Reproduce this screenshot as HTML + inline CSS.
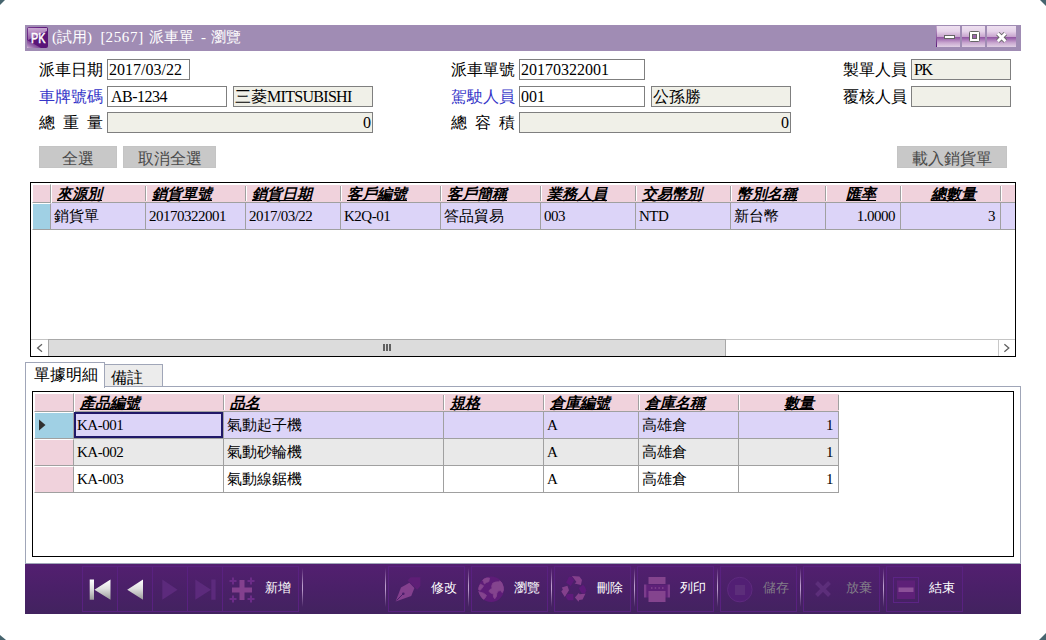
<!DOCTYPE html>
<html lang="zh-Hant">
<head>
<meta charset="utf-8">
<title>派車單 - 瀏覽</title>
<style>
html,body{margin:0;padding:0}
body{width:1046px;height:640px;overflow:hidden;position:relative;background:#46646e;font-family:"Liberation Serif",serif;color:#000}
#page{position:absolute;left:0;top:0;width:1046px;height:640px;background:#fff;clip-path:polygon(5px 0,1040px 0,1046px 6px,1046px 633px,1039px 640px,6px 640px,0 635px,0 5px)}
#page div,#page span,#page svg{position:absolute;box-sizing:border-box;white-space:nowrap}
/* title bar */
#title{left:25px;top:25px;width:996px;height:26px;background:#a08cb4}
#title .cap{left:27px;top:1px;height:22px;line-height:22px;font-size:15px;color:#fff}
.wb{top:1px;height:21px;background:linear-gradient(to bottom,#eee0f0 0%,#e6d4ea 25%,#c9a6cf 50%,#9056a2 53%,#9e68ae 60%,#c9a8d0 80%,#e0cfe4 100%)}
/* form */
.lbl{font-size:16px;line-height:21px;height:21px}
.blue{color:#3535c8}
.inp{height:21px;border:1px solid #7f7f7f;background:#fff;font-size:16px;line-height:19px;padding:0 1px;overflow:hidden}
.ro{background:#f0f0e8}
.r{text-align:right}
#page .i{position:static}
.btn{top:146px;height:22px;background:#c8c8c8;border:1px solid #c4c4c4;color:#4a4a4a;font-size:16px;line-height:23px;text-align:center}
/* grids */
.grid{border:1px solid #000;background:#fff;overflow:hidden}
.h{background:#f0d2dc;border-bottom:1px solid #a0a0a0;font-size:15px;font-style:italic;font-weight:600;text-decoration:underline;line-height:19px;padding-left:6px;overflow:hidden}
.hi{background:#f0d2dc;border-left:1px solid #fff;border-top:1px solid #fff;border-right:1px solid #a0a0a0;border-bottom:1px solid #a0a0a0}
.vs{top:3px;width:2px;height:15px;background:linear-gradient(to right,#a0a0a0 50%,#fff 50%)}
.c{border-right:1px solid #a0a0a0;border-bottom:1px solid #a0a0a0;font-size:15px;line-height:26px;padding-left:3px;overflow:hidden}
.hr{text-align:right;padding-left:0;padding-right:25px}
.hi.ind{background:#a0d0e4}
.c.r{padding-left:0;padding-right:5px}
.focus{border:2px solid #201868}
.sel{background:#dcd4f8}
.alt{background:#e9e9e9}
.n{font-size:15px;letter-spacing:-.5px;line-height:27px}
/* toolbar */
#tb{left:25px;top:564px;width:996px;height:50px;background:linear-gradient(to bottom,#531f70 0%,#4a2068 50%,#42235f 100%)}
.tbtn{top:2px;height:46px;border:1px solid #592180}
.tbtn .t{left:42px;top:12.5px;font-family:"Liberation Sans",sans-serif;font-size:12.6px;line-height:16px;color:#fff}
.tbtn .t.dis{color:#827e88}
.sep{top:4px;width:1px;height:39px;background:linear-gradient(to bottom,rgba(200,170,215,0) 0%,rgba(200,170,215,.9) 45%,rgba(200,170,215,.9) 55%,rgba(200,170,215,0) 100%)}
</style>
</head>
<body>
<div id="page">

<!-- TITLE BAR -->
<div id="title">
  <svg style="left:2px;top:2px" width="21" height="21" viewBox="0 0 21 21">
    <defs>
      <linearGradient id="ig" x1="0" y1="0" x2="1" y2="1"><stop offset="0" stop-color="#7a3a92"/><stop offset=".5" stop-color="#5a1478"/><stop offset="1" stop-color="#5a1478"/></linearGradient>
      <linearGradient id="ig2" x1="0" y1="0" x2="0" y2="1"><stop offset="0" stop-color="#d8bedf"/><stop offset="1" stop-color="#9a62aa"/></linearGradient>
      <linearGradient id="ig3" x1="0" y1="1" x2="1" y2="0"><stop offset="0" stop-color="#dcc6e2"/><stop offset="1" stop-color="#7a3a92" stop-opacity="0"/></linearGradient>
    </defs>
    <rect x="0" y="0" width="21" height="21" rx="2" fill="url(#ig)"/>
    <path d="M1 1H20V4L1 13Z" fill="url(#ig2)" opacity=".85"/>
    <path d="M0 13V21H14Z" fill="url(#ig3)" opacity=".9"/>
    <text x="4" y="16.4" font-family="Liberation Sans, sans-serif" font-size="14.3" textLength="14.5" lengthAdjust="spacingAndGlyphs" fill="#fff" stroke="#fff" stroke-width=".5">PK</text>
  </svg>
  <div class="cap">(試用)<span class="i" style="word-spacing:4.7px"> </span>[<span class="i" style="letter-spacing:.7px">2567</span>]<span class="i" style="word-spacing:1.6px"> </span>派車單<span class="i" style="word-spacing:3.5px"> </span>-<span class="i" style="word-spacing:1px"> </span>瀏覽</div>
  <div class="wb" style="left:911px;width:24px"><div style="left:0;top:0;width:1px;height:21px;background:linear-gradient(to bottom,#c8a8d0,#5a1878)"></div><svg width="24" height="21"><rect x="8.5" y="9.5" width="10" height="3" fill="#fff" stroke="#666"/></svg></div>
  <div class="wb" style="left:937px;width:23px"><svg width="23" height="21"><rect x="7.5" y="5.5" width="10" height="10" rx="1" fill="#fff" stroke="#666"/><rect x="10.5" y="8.5" width="4" height="4" fill="#9c64ac" stroke="#666"/></svg></div>
  <div class="wb" style="left:962px;width:29px"><svg width="29" height="21"><path d="M10.800 7.600L18.400 15.200M18.400 7.600L10.800 15.200" stroke="#6a6a6a" stroke-width="4.600" fill="none"/><path d="M10.800 7.600L18.400 15.200M18.400 7.600L10.800 15.200" stroke="#fff" stroke-width="2.800" fill="none"/></svg></div>
</div>

<!-- FORM -->
<div class="lbl" style="left:39px;top:59px">派車日期</div>
<div class="inp" style="left:107px;top:59px;width:83px">2017/03/22</div>
<div class="lbl blue" style="left:39px;top:86px">車牌號碼</div>
<div class="inp" style="left:107px;top:86px;width:120px;padding-left:3px;letter-spacing:-.5px">AB-1234</div>
<div class="inp ro" style="left:233px;top:86px;width:140px">三菱<span class="i" style="letter-spacing:-.7px">MITSUBISHI</span></div>
<div class="lbl" style="left:39px;top:112px;width:64px">總<span style="left:24px">重</span><span style="left:48px">量</span></div>
<div class="inp ro r" style="left:107px;top:112px;width:266px">0</div>

<div class="lbl" style="left:451px;top:59px">派車單號</div>
<div class="inp" style="left:519px;top:59px;width:126px">20170322001</div>
<div class="lbl blue" style="left:451px;top:86px">駕駛人員</div>
<div class="inp" style="left:519px;top:86px;width:126px">001</div>
<div class="inp ro" style="left:651px;top:86px;width:140px">公孫勝</div>
<div class="lbl" style="left:451px;top:112px;width:64px">總<span style="left:24px">容</span><span style="left:48px">積</span></div>
<div class="inp ro r" style="left:519px;top:112px;width:272px">0</div>

<div class="lbl" style="left:843px;top:59px">製單人員</div>
<div class="inp ro" style="left:911px;top:59px;width:100px;padding-left:2px;letter-spacing:-1.4px">PK</div>
<div class="lbl" style="left:843px;top:86px">覆核人員</div>
<div class="inp ro" style="left:911px;top:86px;width:100px"></div>

<div class="btn" style="left:39px;width:78px">全選</div>
<div class="btn" style="left:123px;width:93px">取消全選</div>
<div class="btn" style="left:897px;width:110px">載入銷貨單</div>

<!-- UPPER GRID -->
<div class="grid" id="g1" style="left:30px;top:182px;width:986px;height:175px">
  <div class="hi" style="left:1px;top:1px;width:19px;height:19px"></div>
  <div class="h" style="left:20px;top:2px;width:95px;height:18px">來源別</div>
  <div style="left:20px;top:1px;width:1px;height:19px;background:#fff"></div>
  <div class="h" style="left:115px;top:2px;width:100px;height:18px">銷貨單號</div>
  <div class="h" style="left:215px;top:2px;width:95px;height:18px">銷貨日期</div>
  <div class="h" style="left:310px;top:2px;width:100px;height:18px">客戶編號</div>
  <div class="h" style="left:410px;top:2px;width:100px;height:18px">客戶簡稱</div>
  <div class="h" style="left:510px;top:2px;width:95px;height:18px">業務人員</div>
  <div class="h" style="left:605px;top:2px;width:95px;height:18px">交易幣別</div>
  <div class="h" style="left:700px;top:2px;width:95px;height:18px">幣別名稱</div>
  <div class="h hr" style="left:795px;top:2px;width:75px;height:18px">匯率</div>
  <div class="h hr" style="left:870px;top:2px;width:100px;height:18px">總數量</div>
  <div class="h" style="left:970px;top:2px;width:15px;height:18px"></div>
  <div class="vs" style="left:114px"></div>
  <div class="vs" style="left:214px"></div>
  <div class="vs" style="left:309px"></div>
  <div class="vs" style="left:409px"></div>
  <div class="vs" style="left:509px"></div>
  <div class="vs" style="left:604px"></div>
  <div class="vs" style="left:699px"></div>
  <div class="vs" style="left:794px"></div>
  <div class="vs" style="left:869px"></div>
  <div class="vs" style="left:969px"></div>
  <div class="hi ind" style="left:1px;top:20px;width:19px;height:27px"></div>
  <div class="c sel" style="left:20px;top:20px;width:95px;height:27px">銷貨單</div>
  <div class="c sel n" style="left:115px;top:20px;width:100px;height:27px">20170322001</div>
  <div class="c sel n" style="left:215px;top:20px;width:95px;height:27px">2017/03/22</div>
  <div class="c sel n" style="left:310px;top:20px;width:100px;height:27px">K2Q-01</div>
  <div class="c sel" style="left:410px;top:20px;width:100px;height:27px">答品貿易</div>
  <div class="c sel n" style="left:510px;top:20px;width:95px;height:27px">003</div>
  <div class="c sel n" style="left:605px;top:20px;width:95px;height:27px">NTD</div>
  <div class="c sel" style="left:700px;top:20px;width:95px;height:27px">新台幣</div>
  <div class="c sel n r" style="left:795px;top:20px;width:75px;height:27px">1.0000</div>
  <div class="c sel n r" style="left:870px;top:20px;width:100px;height:27px">3</div>
  <div class="c sel" style="left:970px;top:20px;width:15px;height:27px;border-right:0"></div>
  <!-- horizontal scrollbar -->
  <div style="left:0;top:156px;width:984px;height:17px;background:#fff;border-top:1px solid #c4c4c4"></div>
  <div style="left:17px;top:156px;width:678px;height:17px;background:#dcdcdc;border:1px solid #a8a8a8;border-bottom:0"></div>
  <div style="left:352px;top:161px;width:2px;height:7px;background:#606060"></div>
  <div style="left:355px;top:161px;width:2px;height:7px;background:#606060"></div>
  <div style="left:358px;top:161px;width:2px;height:7px;background:#606060"></div>
  <svg width="17" height="16" style="left:0;top:157px"><path d="M11 4.2L6.6 8L11 11.8" fill="none" stroke="#606060" stroke-width="1.3"/></svg>
  <div style="left:967px;top:157px;width:1px;height:16px;background:#c8c8c8"></div>
  <svg width="17" height="16" style="left:968px;top:157px"><path d="M5.4 4.2L9.8 8L5.4 11.8" fill="none" stroke="#606060" stroke-width="1.3"/></svg>
</div>

<!-- TABS -->
<div id="tabs">
  <div id="panel" style="left:25px;top:386px;width:996px;height:178px;border:1px solid #a0a6b8;background:#fff"></div>
  <div id="tab2" style="left:104px;top:364px;width:59px;height:23px;border:1px solid #a0a6b8;background:#ececec;font-size:16px;line-height:26px;padding-left:6px">備註</div>
  <div id="tab1" style="left:25px;top:362px;width:80px;height:26px;border:1px solid #a0a6b8;border-bottom:0;background:#fff;font-size:16px;line-height:24px;padding-left:8px">單據明細</div>
  <div class="grid" id="g2" style="left:32px;top:391px;width:982px;height:166px">
  <div class="hi" style="left:1px;top:1px;width:40px;height:19px"></div>
  <div class="h" style="left:41px;top:2px;width:150px;height:18px">產品編號</div>
  <div style="left:41px;top:1px;width:1px;height:19px;background:#fff"></div>
  <div class="h" style="left:191px;top:2px;width:220px;height:18px">品名</div>
  <div class="h" style="left:411px;top:2px;width:100px;height:18px">規格</div>
  <div class="h" style="left:511px;top:2px;width:95px;height:18px">倉庫編號</div>
  <div class="h" style="left:606px;top:2px;width:100px;height:18px">倉庫名稱</div>
  <div class="h hr" style="left:706px;top:2px;width:100px;height:18px">數量</div>
  <div class="vs" style="left:190px"></div>
  <div class="vs" style="left:410px"></div>
  <div class="vs" style="left:510px"></div>
  <div class="vs" style="left:605px"></div>
  <div class="vs" style="left:705px"></div>
  <div class="vs" style="left:805px"></div>
  <div class="hi ind" style="left:1px;top:20px;width:40px;height:27px"><svg width="10" height="12" style="left:3px;top:6px"><path d="M1 0.5L7.5 6L1 11.5Z" fill="#303030"/></svg></div>
  <div class="c sel n" style="left:41px;top:20px;width:150px;height:27px">KA-001</div>
  <div class="c sel" style="left:191px;top:20px;width:220px;height:27px">氣動起子機</div>
  <div class="c sel" style="left:411px;top:20px;width:100px;height:27px"></div>
  <div class="c sel n" style="left:511px;top:20px;width:95px;height:27px">A</div>
  <div class="c sel" style="left:606px;top:20px;width:100px;height:27px">高雄倉</div>
  <div class="c sel n r" style="left:706px;top:20px;width:100px;height:27px">1</div>
  <div class="hi" style="left:1px;top:47px;width:40px;height:27px"></div>
  <div class="c alt n" style="left:41px;top:47px;width:150px;height:27px">KA-002</div>
  <div class="c alt" style="left:191px;top:47px;width:220px;height:27px">氣動砂輪機</div>
  <div class="c alt" style="left:411px;top:47px;width:100px;height:27px"></div>
  <div class="c alt n" style="left:511px;top:47px;width:95px;height:27px">A</div>
  <div class="c alt" style="left:606px;top:47px;width:100px;height:27px">高雄倉</div>
  <div class="c alt n r" style="left:706px;top:47px;width:100px;height:27px">1</div>
  <div class="hi" style="left:1px;top:74px;width:40px;height:27px"></div>
  <div class="c n" style="left:41px;top:74px;width:150px;height:27px">KA-003</div>
  <div class="c" style="left:191px;top:74px;width:220px;height:27px">氣動線鋸機</div>
  <div class="c" style="left:411px;top:74px;width:100px;height:27px"></div>
  <div class="c n" style="left:511px;top:74px;width:95px;height:27px">A</div>
  <div class="c" style="left:606px;top:74px;width:100px;height:27px">高雄倉</div>
  <div class="c n r" style="left:706px;top:74px;width:100px;height:27px">1</div>
  <div class="focus" style="left:41px;top:20px;width:149px;height:26px"></div>
  </div>
</div>

<!-- TOOLBAR -->
<div id="tb">
  <div class="tbtn" style="left:57px;width:36px"></div>
  <div class="tbtn" style="left:92px;width:36px"></div>
  <div class="tbtn" style="left:127px;width:36px"></div>
  <div class="tbtn" style="left:162px;width:36px"></div>
  <svg width="140" height="22" style="left:57px;top:15px"><defs><linearGradient id="ng" x1="0" y1="0" x2="0" y2="1"><stop offset="0" stop-color="#ffffff"/><stop offset=".45" stop-color="#e0e0e0"/><stop offset="1" stop-color="#9a9a9a"/></linearGradient></defs>
    <path d="M7.700 0.600h4.300v20.200h-4.300zM12.400 10.700L28.500 0.600v20.200z" fill="url(#ng)"/>
    <path d="M45.200 10.700L61 0.600v20.200z" fill="url(#ng)"/>
    <path d="M80.300 0.600L95.600 10.700L80.300 20.800z" fill="#5c2a7c"/>
    <path d="M113.300 0.600L129 10.700L113.300 20.800zM129.300 0.600h4.300v20.200h-4.300z" fill="#5c2a7c"/>
  </svg>
  <div class="tbtn" style="left:197px;width:77px"><svg width="77" height="46" viewBox="0 0 77 46" style="left:-1px;top:-1px"><path d="M10 21.5h20v5h-20zM17.5 14h5v20h-5z" fill="#84408e"/><path d="M7.5 15h7M11 11.5v7M25.5 15h7M29 11.5v7M7.5 33h7M11 29.5v7M25.5 33h7M29 29.5v7" stroke="#6c2c88" stroke-width="2" fill="none"/></svg><span class="t">新增</span></div>
  <div class="tbtn" style="left:363px;width:77px"><svg width="77" height="46" viewBox="0 0 77 46" style="left:-1px;top:-1px"><path d="M7.6 35.6L13 21.4L21.4 16.8L26.4 21.9L23.2 30.1Z" fill="#84408e"/><path d="M19.5 14.5L22.7 11.3H32.4V20L29.2 23.7Z" fill="#5e1e76"/><path d="M8.5 34.5L15 28" stroke="#4c1f6c" stroke-width="1" fill="none"/><circle cx="15.3" cy="27.8" r="1.3" fill="#4c1f6c"/></svg><span class="t">修改</span></div>
  <div class="tbtn" style="left:446px;width:77px"><svg width="77" height="46" viewBox="0 0 77 46" style="left:-1px;top:-1px"><clipPath id="gc"><circle cx="20.1" cy="23.3" r="12.8"/></clipPath><circle cx="20.1" cy="23.3" r="12.8" fill="#5e1c78"/><path clip-path="url(#gc)" d="M11.6 14.0L14.7 11.8L18.5 12.1L17.9 15.6L15.3 16.6L13.4 18.0L12.4 15.6ZM7.6 21.4L9.4 18.2L12.6 19.8L10.8 22.5L9.2 24.3L7.3 23.5ZM7.3 25.4L10.0 26.5L12.6 27.2L15.5 29.4L14.0 32.0L12.6 33.6L10.0 31.0L8.4 27.8ZM21.7 17.2L24.3 16.1L27.5 15.8L28.6 15.0L31.0 16.6L32.5 20.3L32.8 24.1L31.2 26.7L29.6 24.6L27.0 25.1L25.9 27.2L25.4 30.4L23.8 32.8L22.5 31.0L22.2 27.8L19.5 27.0L17.9 25.1L19.0 23.5L21.1 22.5L20.6 20.3Z" fill="#84448e" stroke="#84448e" stroke-width=".8" stroke-linejoin="round"/></svg><span class="t">瀏覽</span></div>
  <div class="tbtn" style="left:529px;width:77px"><svg width="77" height="46" viewBox="0 0 77 46" style="left:-1px;top:-1px"><path d="M17.9 10.1L25.4 10.5L28.0 14.0L26.9 19.0L20.6 17.4L22.5 16.1Z" fill="#84408c"/><path d="M15.0 10.8L18.2 11.0L20.1 14.5L16.6 20.1L12.1 16.4Z" fill="#5e1a7a"/><path d="M7.8 21.4L13.4 19.8L15.0 24.3L10.8 31.0L7.3 25.4L8.9 23.5Z" fill="#84408c"/><path d="M13.4 28.0L19.3 28.0L19.5 34.2L14.0 34.2L11.6 31.0Z" fill="#5e1a7a"/><path d="M24.8 27.0L25.6 28.3L31.5 27.5L28.6 33.6L25.1 33.9L24.6 35.7L20.9 31.5Z" fill="#84408c"/><path d="M29.1 18.7L31.0 20.9L32.3 24.6L30.7 27.8L27.5 27.2L24.8 21.9Z" fill="#5e1a7a"/></svg><span class="t">刪除</span></div>
  <div class="tbtn" style="left:612px;width:77px"><svg width="77" height="46" viewBox="0 0 77 46" style="left:-1px;top:-1px"><rect x="11.500" y="11" width="17" height="7" fill="#84448e"/><rect x="9" y="18.500" width="22" height="13" fill="#5e2078"/><rect x="7" y="18.500" width="2.300" height="13" fill="#7c3c8c"/><rect x="30.700" y="18.500" width="2.300" height="13" fill="#7c3c8c"/><rect x="11.500" y="25" width="17" height="11" fill="#84448e"/><path d="M14 22h1.500M17.700 22h1.500M21.400 22h1.500M25 22h1.500" stroke="#84448e" stroke-width="1.500"/></svg><span class="t">列印</span></div>
  <div class="tbtn" style="left:695px;width:77px"><svg width="77" height="46" viewBox="0 0 77 46" style="left:-1px;top:-1px"><circle cx="19.800" cy="23.600" r="12.300" fill="#521f74" stroke="#5e2a7e" stroke-width="1"/><rect x="15" y="19" width="10" height="10" fill="#5c2e7a"/></svg><span class="t dis">儲存</span></div>
  <div class="tbtn" style="left:778px;width:77px"><svg width="77" height="46" viewBox="0 0 77 46" style="left:-1px;top:-1px"><path d="M13.500 16.500L26.500 29.500M26.500 16.500L13.500 29.500" stroke="#5c2e7a" stroke-width="4" fill="none"/></svg><span class="t dis">放棄</span></div>
  <div class="tbtn" style="left:861px;width:77px"><svg width="77" height="46" viewBox="0 0 77 46" style="left:-1px;top:-1px"><rect x="7.500" y="11.500" width="25" height="25" fill="none" stroke="#5c2486"/><rect x="11" y="14.500" width="18" height="18.500" fill="#5e2078"/><rect x="12.500" y="21.500" width="15" height="4.500" fill="#8c5098"/></svg><span class="t">結束</span></div>
  <div class="sep" style="left:277px"></div>
  <div class="sep" style="left:360px"></div>
  <div class="sep" style="left:443px"></div>
  <div class="sep" style="left:526px"></div>
  <div class="sep" style="left:609px"></div>
  <div class="sep" style="left:692px"></div>
  <div class="sep" style="left:775px"></div>
  <div class="sep" style="left:858px"></div>
</div>

</div>
</body>
</html>
